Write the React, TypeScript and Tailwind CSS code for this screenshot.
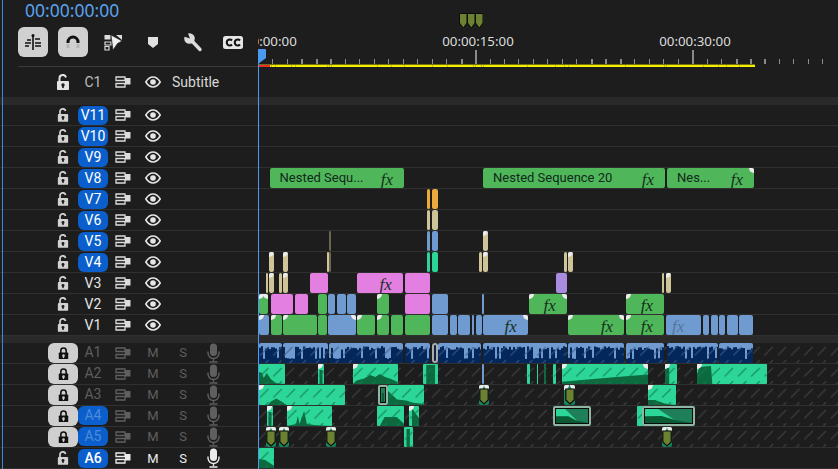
import React from "react";

const G = "#4fb75a", P = "#e37fe0", B = "#6f9bd1", Y = "#cec498", O = "#eea93d", T = "#2bd698", U = "#a98be0", D = "#6b6450";

type C = { s: number; e: number; c: string; tl?: boolean; tr?: boolean; fx?: boolean; label?: string; dim?: boolean };
const c = (s: number, e: number, col: string, o: Partial<C> = {}): C => ({ s, e, c: col, ...o });

const video: Record<string, C[]> = {
  V8: [
    c(269.5, 404, G, { label: "Nested Sequ...", fx: true }),
    c(483, 665, G, { label: "Nested Sequence 20", fx: true }),
    c(667, 754, G, { label: "Nes...", fx: true, tr: true }),
  ],
  V7: [c(427, 430.3, O), c(432, 438, O)],
  V6: [c(427, 430.3, Y), c(432, 438, Y)],
  V5: [c(329, 331.3, D), c(427, 430.3, B), c(432, 438, B), c(483, 487.7, Y, { tl: true })],
  V4: [
    c(269.3, 274, Y, { tl: true }), c(283.3, 288, Y, { tl: true }), c(327, 329, Y), c(329, 331.3, D),
    c(427, 430.3, T), c(432, 438, T), c(479.3, 482, Y), c(483, 487.7, Y, { tl: true }),
    c(564.3, 567, Y), c(568, 573, Y, { tl: true }),
  ],
  V3: [
    c(265.7, 268.3, Y), c(269.3, 274, Y, { tl: true }), c(279.3, 282, Y), c(283.3, 288, Y, { tl: true }),
    c(309.7, 327.7, P), c(357, 402.7, P, { fx: true }), c(404.7, 430.3, P), c(555.7, 566.7, U),
    c(662, 664.3, Y), c(665.7, 670.7, Y, { tl: true }),
  ],
  V2: [
    c(259, 268, G, { tl: true, tr: true }), c(270.7, 293, P), c(294.7, 307.7, P), c(318.3, 326.7, G),
    c(328, 335.3, B), c(337, 345.7, B), c(347, 355.7, B), c(377, 389, G, { tl: true }),
    c(404.7, 430.3, P), c(432, 447.7, B), c(482, 484.3, B),
    c(529.3, 566.7, G, { tl: true, tr: true, fx: true }), c(626, 664, G, { tl: true, fx: true }),
  ],
  V1: [
    c(259, 269, B, { tl: true }), c(271, 281.7, G, { tl: true }), c(283.3, 316.7, G, { tl: true }),
    c(318.3, 326.7, G), c(328, 355.7, B, { tr: true }), c(357, 375.3, G, { tl: true }), c(377, 389, G, { tl: true }),
    c(391, 403, G), c(404.7, 430.3, G), c(432, 447.7, B), c(449.7, 456.7, B), c(458, 470.3, B),
    c(472, 474.3, B), c(475.7, 481.7, B), c(483.3, 527.7, B, { tr: true, fx: true }),
    c(568.3, 624, G, { tl: true, tr: true, fx: true }), c(626, 664, G, { tl: true, fx: true }),
    c(666, 701.3, B, { fx: true, dim: true }), c(703.3, 709, B), c(710.7, 717.7, B), c(719.3, 725.3, B),
    c(727, 738, B), c(739.3, 752.7, B),
  ],
};

type A = { s: number; e: number; kind?: "g" | "blue" | "wave" | "gray"; w?: number[]; tl?: boolean; tr?: boolean; marker?: boolean; sel?: boolean };

const a1: A[] = [[259, 281.7], [283.3, 327.7], [329, 402.7], [404.7, 430.3], [438, 481], [483.3, 566.7], [568.3, 624], [626, 664], [666.7, 718], [719.3, 752.7]].map(([s, e]) => ({ s, e, kind: "wave" as const }));
a1.push({ s: 432, e: 437.7, kind: "gray" });

const audio: Record<string, A[]> = {
  A1: a1,
  A2: [
    { s: 259, e: 285, w: [0, 100, 0, 40, 12, 45, 18, 70, 30, 45, 45, 75, 65, 95, 100, 100] },
    { s: 318.3, e: 324.3, tl: true, w: [25, 100, 25, 30, 75, 30, 75, 100] },
    { s: 353.3, e: 398, tl: true, w: [0, 100, 8, 82, 25, 72, 38, 55, 50, 65, 60, 50, 72, 65, 85, 75, 100, 90, 100, 100] },
    { s: 423.3, e: 438, w: [22, 100, 22, 5, 82, 5, 82, 100] },
    { s: 482, e: 484.3, kind: "blue" },
    { s: 527, e: 529.7, w: [] },
    { s: 537, e: 538.3, w: [] },
    { s: 544, e: 546, w: [0, 100, 0, 0, 100, 0, 100, 100] },
    { s: 553.3, e: 556, w: [] },
    { s: 562, e: 648, tl: true, tr: true, w: [0, 100, 0, 88, 30, 78, 60, 66, 100, 52, 100, 100] },
    { s: 664.7, e: 676.7, tl: true, w: [0, 100, 0, 20, 35, 20, 35, 100] },
    { s: 697.3, e: 767, tl: true, w: [0, 100, 0, 50, 4, 15, 20, 10, 22, 100] },
  ],
  A3: [
    { s: 259, e: 345.3, tl: true, w: [10, 100, 14, 82, 20, 68, 26, 82, 32, 100] },
    { s: 378.3, e: 388.3, sel: true },
    { s: 388.3, e: 424.3, w: [0, 100, 0, 30, 25, 72, 50, 78, 70, 88, 100, 95, 100, 100] },
    { s: 479.3, e: 489.3, marker: true },
    { s: 564, e: 575, marker: true },
    { s: 648, e: 675.7, tl: true, w: [0, 100, 0, 75, 25, 75, 60, 92, 100, 100] },
  ],
  A4: [
    { s: 267, e: 273, tl: true, w: [25, 100, 25, 30, 75, 30, 75, 100] },
    { s: 287, e: 332, tl: true, w: [0, 100, 20, 90, 24, 50, 28, 88, 38, 25, 44, 88, 60, 95, 100, 100] },
    { s: 377, e: 404.3, w: [10, 100, 28, 55, 72, 55, 100, 90, 100, 100] },
    { s: 409.3, e: 419.3, tl: true, w: [30, 100, 30, 10, 55, 30, 100, 60, 100, 100] },
    { s: 552.7, e: 591.3, sel: true, w: [0, 100, 0, 52, 38, 52, 60, 80, 100, 100] },
    { s: 637, e: 643.3 },
    { s: 642, e: 695.3, sel: true, w: [0, 100, 0, 52, 35, 50, 65, 80, 100, 100] },
  ],
  A5: [
    { s: 265.7, e: 276.3, marker: true },
    { s: 279, e: 289.3, marker: true },
    { s: 325.7, e: 335.7, marker: true },
    { s: 404.3, e: 412.7, w: [30, 100, 30, 10, 70, 10, 70, 100] },
    { s: 661.7, e: 672, marker: true },
  ],
  A6: [{ s: 259, e: 274.3, w: [0, 100, 0, 55, 40, 60, 70, 75, 100, 90, 100, 100] }],
};

const stalactites = (s: number, e: number) => {
  const out: { x: number; h: number }[] = [];
  for (let x = 0; x < e - s; x += 2) {
    const k = Math.sin((x + s) * 12.9898) * 43758.5453;
    const r = k - Math.floor(k);
    out.push({ x, h: r > 0.8 ? 10 + r * 6 : 3 + r * 5 });
  }
  return out;
};

const Lock = ({ open, color, hole, size = 14 }: { open?: boolean; color: string; hole: string; size?: number }) => (
  <svg width={size} height={size * 1.15} viewBox="0 0 14 16">
    <path d={open ? "M3.5 8V4.2a3.300 3.300 0 0 1 6.500 -0.800" : "M3.6 8V4.6a3.4 3.4 0 0 1 6.8 0V8"} fill="none" stroke={color} strokeWidth="2" />
    <rect x="1" y="7" width="12" height="9" rx="1" fill={color} />
    <circle cx="7" cy="11" r="1.7" fill={hole} />
    <rect x="6.2" y="11" width="1.6" height="3" fill={hole} />
  </svg>
);

const Sync = ({ color }: { color: string }) => (
  <svg width="16" height="12" viewBox="0 0 16 12">
    <path d="M1 1h9v3.500H1zM1 7.500h9V11H1z" fill="none" stroke={color} strokeWidth="1.300" />
    <path d="M10 2h5.500v6.500H10z" fill={color} />
  </svg>
);

const Eye = ({ color = "#e6e6e6" }: { color?: string }) => (
  <svg width="16" height="12" viewBox="0 0 16 12">
    <path d="M0.800 6C3 2.500 5.500 1 8 1s5 1.500 7.200 5C13 9.500 10.500 11 8 11S3 9.500 0.800 6z" fill="none" stroke={color} strokeWidth="1.600" />
    <circle cx="8" cy="6" r="2.800" fill={color} />
  </svg>
);

const Mic = ({ color }: { color: string }) => (
  <svg width="13" height="20" viewBox="0 0 13 20">
    <rect x="3" y="0.500" width="7" height="12.500" rx="3.500" fill={color} />
    <path d="M1 8.500v1.500a5.500 5.500 0 0 0 11 0V8.500M6.500 15.500V18M2.500 19h8" fill="none" stroke={color} strokeWidth="1.400" />
  </svg>
);

const font = { fontFamily: '"Noto Sans", sans-serif' };
const uiFont = { fontFamily: 'Roboto, "Noto Sans", sans-serif' };

const Corner = ({ right }: { right?: boolean }) => (
  <span className={right ? "absolute top-0 right-0 w-[5px] h-[5px] bg-[#ececec] rounded-bl-[5px]" : "absolute top-0 left-0 w-[5px] h-[5px] bg-[#ececec] rounded-br-[5px]"} />
);

const Fx = ({ dim }: { dim?: boolean }) => (
  <span className={dim ? "absolute right-[17px] top-[-1px] text-[17px] italic text-[#56749b]" : "absolute right-[11px] top-[-1px] text-[17px] italic text-[#15301a]"} style={{ fontFamily: '"Liberation Serif", serif' }}>fx</span>
);

const VClip = ({ d }: { d: C }) => (
  <div className="absolute top-0 bottom-0 rounded-[2px] overflow-hidden" style={{ left: d.s - 258, width: d.e - d.s, backgroundColor: d.c }}>
    {d.label && <span className="absolute left-[10px] top-0 text-[13px] leading-[20px] whitespace-nowrap text-[#12291a]" style={uiFont}>{d.label}</span>}
    {d.fx && <Fx dim={d.dim} />}
    {d.tl && <Corner />}
    {d.tr && <Corner right />}
  </div>
);

const Hatch = ({ id }: { id: string }) => (
  <svg className="absolute inset-0 w-full h-full">
    <rect width="100%" height="100%" fill={`url(#${id})`} />
  </svg>
);

const AClip = ({ d }: { d: A }) => {
  const width = d.e - d.s;
  const box = { left: d.s - 258, width };
  if (d.kind === "wave") {
    return (
      <div className="absolute top-0 bottom-0 rounded-[2px] overflow-hidden bg-[#03275a]" style={box}>
        <svg className="absolute inset-0 w-full h-full">
          {stalactites(d.s, d.e).map((b) => (
            <rect key={b.x} x={b.x} y="0" width="2" height={b.h} fill="#6f9bd1" />
          ))}
        </svg>
        <Hatch id="hatchBlue" />
      </div>
    );
  }
  if (d.kind === "gray") {
    return <div className="absolute top-0 bottom-0 rounded-[3px] border-2 border-[#a8acb0] bg-[#12233a]" style={box} />;
  }
  if (d.kind === "blue") {
    return <div className="absolute top-0 bottom-0 rounded-[1px] bg-[#6f9bd1]" style={box} />;
  }
  if (d.sel) {
    return (
      <div className="absolute top-0 bottom-0 rounded-[2px] border-2 border-[#8fb5a5] overflow-hidden bg-[#0a0a0a] p-px" style={box}>
        <div className="relative w-full h-full bg-[#1f7f5b] overflow-hidden">
          {d.w && width > 20 && (
            <svg className="absolute inset-0 w-full h-full" viewBox="0 0 100 100" preserveAspectRatio="none">
              <polygon points="0,0 28,0 72,100 0,60" fill="#2bd698" />
              <polygon points={d.w.join(" ")} fill="#0a5a34" />
            </svg>
          )}
          {width <= 20 && <div className="absolute top-[5px] bottom-0 left-[1px] right-[1px] bg-[#0a5a34]" />}
        </div>
      </div>
    );
  }
  if (d.marker) {
    return (
      <div className="absolute top-0 bottom-0 rounded-[2px] overflow-hidden bg-[#128a5a]" style={box}>
        <Hatch id="hatchGreen" />
        <Corner />
        <Corner right />
        <svg className="absolute left-1/2 top-[3px] -ml-[5px]" width="10" height="17" viewBox="0 0 10 17">
          <path d="M0.800 1h8.400v11l-4.200 4-4.200-4z" fill="#6c8232" stroke="#0a0a0a" strokeWidth="1.200" />
        </svg>
      </div>
    );
  }
  return (
    <div className="absolute top-0 bottom-0 rounded-[1px] overflow-hidden bg-[#2bd698]" style={box}>
      {d.w && d.w.length > 0 && (
        <svg className="absolute inset-0 w-full h-full" viewBox="0 0 100 100" preserveAspectRatio="none">
          <polygon points={d.w.join(" ")} fill="#0c6a3e" />
        </svg>
      )}
      <Hatch id="hatchGreen" />
      {d.tl && <Corner />}
      {d.tr && <Corner right />}
    </div>
  );
};

const LEFT = "w-[258px] shrink-0 pl-[48px] grid grid-cols-[30px_30px_30px_30px_30px_30px] items-center h-full";

const VRow = ({ name, target }: { name: string; target: boolean }) => (
  <div className="flex h-[21.14px] border-b border-[#303030]">
    <div className={LEFT}>
      <div className="flex justify-center"><Lock open color="#d2d2d2" hole="#1d1d1d" size={12} /></div>
      {target ? (
        <div className="h-[19px] rounded-[6px] bg-[#0b5fcc] text-white text-[14px] leading-[19px] text-center" style={uiFont}>{name}</div>
      ) : (
        <div className="text-[#e4e4e4] text-[14px] leading-[19px] text-center" style={uiFont}>{name}</div>
      )}
      <div className="flex justify-center"><Sync color="#dcdcdc" /></div>
      <div className="flex justify-center"><Eye /></div>
    </div>
    <div className="relative flex-1">{(video[name] || []).map((d, i) => <VClip key={i} d={d} />)}</div>
  </div>
);

const ARow = ({ name, locked, target }: { name: string; locked: boolean; target: boolean }) => {
  const dim = locked ? "#5f5f5f" : "#ececec";
  return (
    <div className="flex h-[21.14px] border-b border-[#303030]">
      <div className={LEFT}>
        {locked ? (
          <div className="h-[20px] rounded-[6px] bg-[#cfcfcf] flex items-center justify-center"><Lock color="#111111" hole="#cfcfcf" size={11} /></div>
        ) : (
          <div className="flex justify-center"><Lock open color="#d2d2d2" hole="#1d1d1d" size={12} /></div>
        )}
        {target ? (
          <div className={locked ? "h-[19px] rounded-[6px] bg-[#0b5fcc] text-[#4c8bd8] text-[14px] leading-[19px] text-center" : "h-[19px] rounded-[6px] bg-[#0b5fcc] text-white text-[14px] font-medium leading-[19px] text-center"} style={uiFont}>{name}</div>
        ) : (
          <div className="text-[#5f5f5f] text-[14px] leading-[19px] text-center" style={uiFont}>{name}</div>
        )}
        <div className="flex justify-center"><Sync color={dim} /></div>
        <div className="text-[13px] text-center leading-[19px]" style={{ ...uiFont, color: dim }}>M</div>
        <div className="text-[13px] text-center leading-[19px]" style={{ ...uiFont, color: dim }}>S</div>
        <div className="flex justify-center"><Mic color={dim} /></div>
      </div>
      <div className="relative flex-1">
        {locked && <Hatch id="hatchGray" />}
        {(audio[name] || []).map((d, i) => <AClip key={i} d={d} />)}
      </div>
    </div>
  );
};

const thick = new Set([3, 4, 5, 14, 23, 24, 25, 33, 34, 35]);
const ticks = Array.from({ length: 40 }, (_, i) => i).filter((i) => i > 0);
const labels = [261, 478, 695];
const barMarks = [271, 275, 291, 295, 327, 329, 331, 377, 391, 404, 432, 447, 473, 475, 481, 483, 527, 555, 564, 568, 625, 664, 666, 703, 718, 726, 739];

const Ruler = () => (
  <div className="relative flex-1 overflow-hidden">
    {labels.map((x, i) => (
      <span key={i} className="absolute top-[32px] w-[80px] text-center text-[13.300px] leading-[18px] text-[#dcdcdc]" style={{ ...font, left: x - 258 - 40 }}>{i === 0 ? "00:00:00:00" : i === 1 ? "00:00:15:00" : "00:00:30:00"}</span>
    ))}
    {ticks.map((k) => {
      const major = k === 15 || k === 30;
      const w = major || thick.has(k) ? 2 : 1;
      return <span key={k} className={major ? "absolute bottom-[3px] h-[14px] bg-[#8a8a8a]" : "absolute bottom-[3px] h-[5px] bg-[#8a8a8a]"} style={{ left: 14.47 * k, width: w }} />;
    })}
    <div className="absolute left-0 bottom-0 w-[497px] h-[3px] bg-[#6e6e12]">
      <div className="absolute left-0 right-0 top-[1px] h-[2px] bg-[#f6f000]" />
      <div className="absolute left-0 top-[1px] w-[12px] h-[2px] bg-[#ee2b2b]" />
      {barMarks.map((x) => <span key={x} className="absolute top-[1px] w-px h-[2px] bg-[#c2bd10]" style={{ left: x - 258 }} />)}
    </div>
    <svg className="absolute left-[201px] top-[13px]" width="24" height="16" viewBox="0 0 24 16">
      {[0, 8, 16].map((x) => (
        <path key={x} d={`M${x + 0.5} 0.500h7.500v9.500l-3.700 5-3.800-5z`} fill="#6c8232" stroke="#0b0b0b" strokeWidth="1" />
      ))}
    </svg>
  </div>
);

const Tool = ({ on, children }: { on?: boolean; children: React.ReactNode }) => (
  <div className={on ? "w-[30px] h-[30px] rounded-[6px] bg-[#d0d0d0] flex items-center justify-center" : "w-[30px] h-[30px] flex items-center justify-center"}>{children}</div>
);

export default function App() {
  return (
    <div className="relative w-[838px] h-[469px] overflow-hidden bg-[#1d1d1d] flex flex-col" style={font}>
      <svg className="absolute w-0 h-0">
        <defs>
          {[["hatchGray", "#454545"], ["hatchGreen", "#127a54"], ["hatchBlue", "#3a5a88"]].map(([id, col]) => (
            <pattern key={id} id={id} width="13.300" height="13.300" patternUnits="userSpaceOnUse">
              <path d="M1 12.500L9.500 4" stroke={col} strokeWidth="1" fill="none" />
            </pattern>
          ))}
        </defs>
      </svg>

      <div className="flex h-[67px] shrink-0">
        <div className="w-[258px] shrink-0 flex flex-col">
          <div className="pl-[25px] h-[27px] text-[17.500px] leading-[21px] text-[#5aa2ee]" style={font}>00:00:00:00</div>
          <div className="pl-[18px] flex gap-[10px] h-[30px]">
            <Tool on>
              <svg width="18" height="16" viewBox="0 0 18 16">
                <circle cx="9" cy="1.500" r="1.500" fill="#111" />
                <path d="M9 1v15M3 6h4M1 9h6M1 12h4M11 5h5M11 9h6M11 12h6" stroke="#111" strokeWidth="1.600" />
              </svg>
            </Tool>
            <Tool on>
              <svg width="14" height="14" viewBox="0 0 14 14">
                <path d="M2 8V7a5 5 0 0 1 10 0v1" fill="none" stroke="#111" strokeWidth="3" />
                <path d="M2 9v4M12 9v4" stroke="#b5b5b5" strokeWidth="3" />
              </svg>
            </Tool>
            <Tool>
              <svg width="18" height="17" viewBox="0 0 18 17">
                <path d="M1 8h6v3H1zM1 12.500h4V16H1z" fill="none" stroke="#dcdcdc" strokeWidth="1.200" />
                <path d="M0.500 1h6v4.500h-6z" fill="#dcdcdc" />
                <path d="M7 1l11 6-4.500 2.500L9 16z" fill="#f0f0f0" stroke="#1d1d1d" strokeWidth="0.600" />
                <path d="M12 1h6v5z" fill="#dcdcdc" />
              </svg>
            </Tool>
            <Tool>
              <svg width="10" height="11" viewBox="0 0 10 11"><path d="M0 0h10v7l-5 4-5-4z" fill="#e0e0e0" /></svg>
            </Tool>
            <Tool>
              <svg width="20" height="20" viewBox="0 0 20 20">
                <path d="M7.500 7.500L17 17.500" stroke="#dcdcdc" strokeWidth="3.400" strokeLinecap="round" />
                <circle cx="6.500" cy="6.500" r="5.300" fill="#dcdcdc" />
                <path d="M7 6.500L4 -1 -1 4z" fill="#1d1d1d" />
              </svg>
            </Tool>
            <Tool>
              <svg width="20" height="13" viewBox="0 0 20 13">
                <rect width="20" height="13" rx="2.500" fill="#e6e6e6" />
                <path d="M9 4.500a3 3 0 1 0 0 4M17 4.500a3 3 0 1 0 0 4" fill="none" stroke="#111" strokeWidth="2.100" />
              </svg>
            </Tool>
          </div>
          <div className="ml-[18px] mt-[9px] h-px bg-[#3a3a3a]" />
        </div>
        <Ruler />
      </div>

      <div className="flex h-[30px] shrink-0">
        <div className={LEFT}>
          <div className="flex justify-center"><Lock open color="#e4e4e4" hole="#1d1d1d" size={14} /></div>
          <div className="text-[#bdbdbd] text-[14px] text-center" style={uiFont}>C1</div>
          <div className="flex justify-center"><Sync color="#dcdcdc" /></div>
          <div className="flex justify-center"><Eye /></div>
          <div className="col-span-2 pl-[4px] text-[#d8d8d8] text-[14px] whitespace-nowrap" style={uiFont}>Subtitle</div>
        </div>
      </div>
      <div className="h-[8px] shrink-0 bg-[#2a2a2a]" />

      {["V11", "V10", "V9", "V8", "V7", "V6", "V5", "V4"].map((n) => <VRow key={n} name={n} target />)}
      {["V3", "V2", "V1"].map((n) => <VRow key={n} name={n} target={false} />)}

      <div className="h-[6.500px] shrink-0 bg-[#2a2a2a]" />

      <ARow name="A1" locked target={false} />
      <ARow name="A2" locked target={false} />
      <ARow name="A3" locked target={false} />
      <ARow name="A4" locked target />
      <ARow name="A5" locked target />
      <ARow name="A6" locked={false} target />

      <div className="absolute left-[2px] top-0 bottom-0 w-px bg-[#3d86dc]" />
      <div className="absolute left-[258px] top-[62px] bottom-0 w-px bg-[#4a9bf0]" />
      <svg className="absolute left-[258px] top-[49px]" width="8" height="15" viewBox="0 0 8 15">
        <path d="M0 0h7a1 1 0 0 1 1 1v8l-8 6z" fill="#4a9bf0" />
      </svg>
    </div>
  );
}
